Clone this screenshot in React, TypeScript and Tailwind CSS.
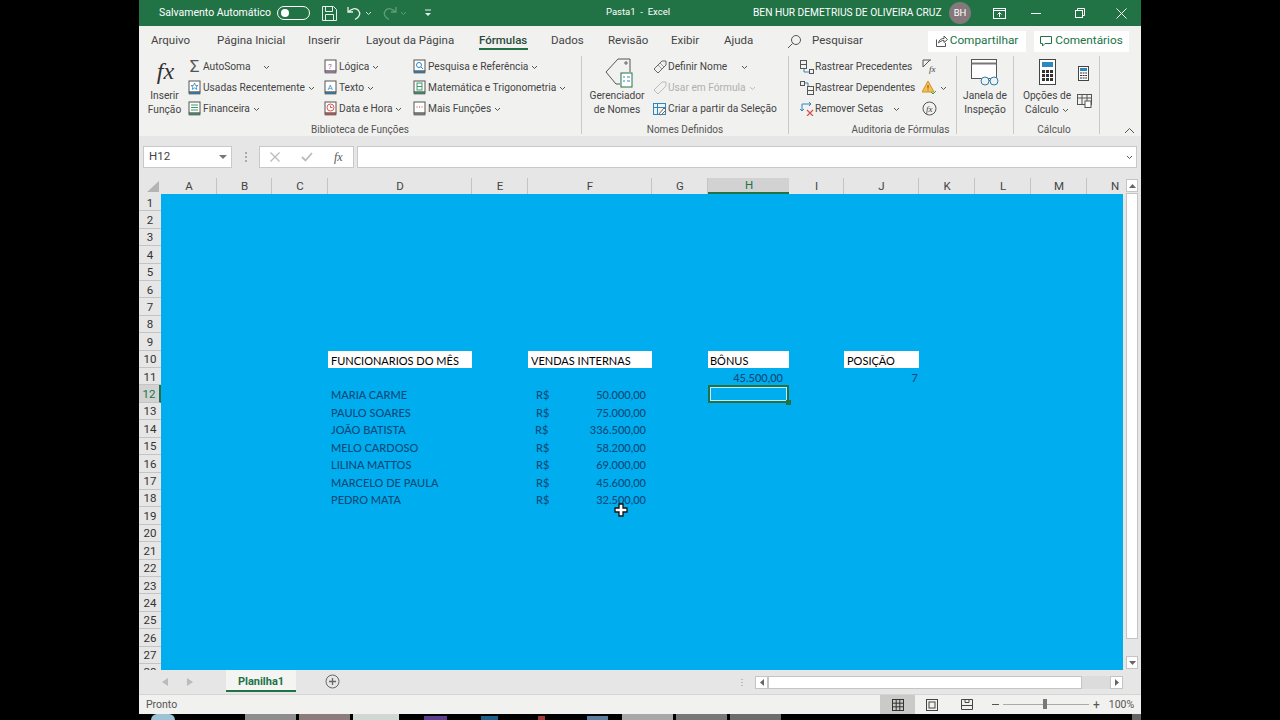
import React from "react";

const UI = "font-['Roboto','Open_Sans',sans-serif]";

const Chev = ({ c = "#555" }: { c?: string }) => (
  <svg width="7" height="5" viewBox="0 0 7 5" className="shrink-0 ml-[3px] mt-[1px]"><path d="M1 1l2.500 2.500L6 1" fill="none" stroke={c} strokeWidth="1" /></svg>
);

const Book = ({ fill, mark }: { fill: string; mark: React.ReactNode }) => (
  <svg width="13" height="15" viewBox="0 0 13 15" className="shrink-0">
    <rect x="1" y="1" width="11" height="11" fill="#fff" stroke="#555" />
    <rect x="1" y="12" width="11" height="2" fill={fill} stroke="#555" strokeWidth=".7" />
    {mark}
  </svg>
);

const Row = ({ icon, label, chev, dim }: { icon: React.ReactNode; label: string; chev?: boolean; dim?: boolean }) => (
  <div className={`flex items-center h-[21px] whitespace-nowrap ${dim ? "text-[#b0b0b0]" : "text-[#444]"}`}>
    <span className="w-[15px] h-[16px] flex items-center justify-center shrink-0">{icon}</span>
    <span className="ml-[1px] text-[10.2px]">{label}</span>
    {chev ? <Chev c={dim ? "#bbb" : "#555"} /> : null}
  </div>
);

const Group = ({ w, label, labelCls = "", children }: { w: string; label: string; labelCls?: string; children: React.ReactNode }) => (
  <div className={`${w} h-[78px] flex flex-col border-r border-[#c9c9c7] shrink-0 my-[2px]`}>
    <div className="flex-1 flex min-h-0">{children}</div>
    <div className={`h-[15px] mb-[-4px] text-center text-[10px] leading-[14px] text-[#555] whitespace-nowrap ${labelCls}`}>{label}</div>
  </div>
);

const colWidths = [["A", 56], ["B", 55], ["C", 56], ["D", 144], ["E", 56], ["F", 124], ["G", 56], ["H", 81], ["I", 55], ["J", 75], ["K", 56], ["L", 56], ["M", 56], ["N", 56]] as const;

const names = [
  ["MARIA CARME", "50.000,00", "row-start-12", "pl-[8px]"],
  ["PAULO SOARES", "75.000,00", "row-start-13", "pl-[8px]"],
  ["JOÃO BATISTA", "336.500,00", "row-start-14", "pl-[7px]"],
  ["MELO CARDOSO", "58.200,00", "row-start-15", "pl-[8px]"],
  ["LILINA MATTOS", "69.000,00", "row-start-16", "pl-[8px]"],
  ["MARCELO DE PAULA", "45.600,00", "row-start-17", "pl-[8px]"],
  ["PEDRO MATA", "32.500,00", "row-start-18", "pl-[8px]"],
];

const tabs = [
  ["Arquivo", "ml-[12px] w-[66px]"], ["Página Inicial", "w-[91px]"], ["Inserir", "w-[58px]"], ["Layout da Página", "w-[113px]"],
  ["Fórmulas", "w-[72px]"], ["Dados", "w-[57px]"], ["Revisão", "w-[63px]"], ["Exibir", "w-[53px]"], ["Ajuda", "w-[64px]"],
];

export default function App() {
  return (
    <div className={`w-[1280px] h-[720px] bg-black overflow-hidden flex flex-col items-center ${UI}`}>
      <div className="w-[1002px] h-[714px] shrink-0 flex flex-col bg-[#f1f1ef]">
        {/* Title bar */}
        <div className="h-[26px] bg-[#217346] flex items-center text-white shrink-0 relative">
          <span className="ml-[20px] w-[118px] text-[10.5px] whitespace-nowrap">Salvamento Automático</span>
          <span className="w-[33px] h-[14px] rounded-full border border-white flex items-center pl-[3px]"><span className="w-[8px] h-[8px] rounded-full bg-white" /></span>
          <svg width="15" height="15" viewBox="0 0 15 15" className="ml-[12px]" fill="none" stroke="#e8f1ec"><path d="M.5.5h11l3 3v11H.5z" /><path d="M3.500.5v5h7v-5M3.500 14.500v-6h8v6" /></svg>
          <svg width="15" height="15" viewBox="0 0 15 15" className="ml-[10px]" fill="none" stroke="#e8f1ec" strokeWidth="1.300"><path d="M1 1v5h5M1.500 6C4 2.500 9 1.500 11.500 4.500c2.500 3 1 6.500-3.500 9" /></svg>
          <Chev c="#d5e5dc" />
          <svg width="15" height="15" viewBox="0 0 15 15" className="ml-[10px]" fill="none" stroke="#5f9c7c" strokeWidth="1.300"><path d="M14 1v5H9M13.500 6C11 2.500 6 1.500 3.500 4.500c-2.500 3-1 6.500 3.500 9" /></svg>
          <Chev c="#5f9c7c" />
          <svg width="8" height="8" viewBox="0 0 8 8" className="ml-[17px]"><path d="M1 1h6" stroke="#e8f1ec" /><path d="M1 4h6L4 7z" fill="#e8f1ec" /></svg>
          <span className="ml-[174px] w-[147px] text-[9.5px] mb-[2px] whitespace-pre">Pasta1  -  Excel</span>
          <span className="text-[10.2px] w-[196px] whitespace-nowrap">BEN HUR DEMETRIUS DE OLIVEIRA CRUZ</span>
          <span className="w-[22px] h-[22px] rounded-full bg-[#84787a] text-[9.5px] flex items-center justify-center">BH</span>
          <svg width="13" height="11" viewBox="0 0 13 11" className="ml-[22px]" fill="none" stroke="#fff"><rect x=".5" y=".5" width="12" height="10" /><path d="M.5 2.500h12M6.500 9V4.500M4.500 6.500l2-2 2 2" /></svg>
          <span className="ml-[25px] w-[10px] h-[1px] bg-white" />
          <svg width="10" height="10" viewBox="0 0 10 10" className="ml-[34px]" fill="none" stroke="#fff"><rect x=".5" y="2.500" width="7" height="7" /><path d="M2.500 2.500v-2h7v7h-2" /></svg>
          <svg width="11" height="11" viewBox="0 0 11 11" className="ml-[31px]" fill="none" stroke="#fff"><path d="M.5.5l10 10M10.500.5l-10 10" /></svg>
        </div>

        {/* Tabs */}
        <div className="h-[28px] flex items-center shrink-0 pt-[2px] text-[11.5px] text-[#444]">
          {tabs.map(([t, w]) => (
            <div key={t} className={`${w} shrink-0 h-full flex items-center relative whitespace-nowrap ${t === "Fórmulas" ? "font-medium text-[#2b4a39]" : ""}`}>
              {t}
              {t === "Fórmulas" ? <span className="absolute left-0 bottom-[4px] w-[49px] h-[2px] bg-[#217346]" /> : null}
            </div>
          ))}
          <svg width="15" height="15" viewBox="0 0 15 15" fill="none" stroke="#555" className="ml-[-1px]"><circle cx="9" cy="6" r="4.500" /><path d="M5.500 9.500L1 14" /></svg>
          <span className="ml-[10px] w-[116px]">Pesquisar</span>
          <div className="w-[98px] h-[21px] bg-white flex items-center justify-center text-[#217346] text-[11.8px] gap-[2px]">
            <svg width="12" height="12" viewBox="0 0 12 12" fill="none" stroke="#555"><path d="M.5 4.500v7h9V8M2.500 8C3 5 5 3.500 8 3.500V1l3.500 3.500L8 7.500V5.500C5.500 5.500 4 6.500 2.500 8z" /></svg>
            Compartilhar
          </div>
          <div className="ml-[8px] w-[95px] h-[21px] bg-white flex items-center justify-center text-[#217346] text-[11.8px] gap-[3px]">
            <svg width="12" height="11" viewBox="0 0 12 11" fill="none" stroke="#217346"><path d="M.5.5h11v7H5L2.500 10V7.500h-2z" /></svg>
            Comentários
          </div>
        </div>

        {/* Ribbon */}
        <div className="h-[82px] flex shrink-0 text-[#444] relative">
          <Group w="w-[443px]" label="Biblioteca de Funções">
            <div className="w-[48px] flex flex-col items-center shrink-0">
              <span className="font-['Liberation_Serif',serif] italic text-[24px] leading-[30px] text-[#333] h-[32px] ml-[5px]">fx</span>
              <span className="text-[10.2px] leading-[14px] text-center ml-[3px] mt-[1px]">Inserir<br />Função</span>
            </div>
            <div className="w-[136px] shrink-0">
              <div className="flex items-center h-[21px]"><span className="w-[15px] text-[17px] leading-[17px] text-[#555] text-center">Σ</span><span className="ml-[1px] text-[10.2px] w-[57px] whitespace-nowrap">AutoSoma</span><Chev /></div>
              <Row label="Usadas Recentemente" chev icon={<Book fill="#2e86c1" mark={<path d="M6.500 3l1 2.500h2.500l-2 1.500.8 2.500-2.300-1.500-2.300 1.500.8-2.500-2-1.500h2.500z" fill="none" stroke="#2e86c1" strokeWidth=".8" />} />} />
              <Row label="Financeira" chev icon={<Book fill="#3c9a6a" mark={<path d="M3 4h7M3 6.500h7M3 9h7" stroke="#3c9a6a" />} />} />
            </div>
            <div className="w-[89px] shrink-0">
              <Row label="Lógica" chev icon={<Book fill="#a98bb8" mark={<text x="4" y="10" fontSize="8" fill="#8b5a9f">?</text>} />} />
              <Row label="Texto" chev icon={<Book fill="#2e86c1" mark={<text x="3.500" y="10" fontSize="8" fill="#2e86c1">A</text>} />} />
              <Row label="Data e Hora" chev icon={<Book fill="#d9534f" mark={<g fill="none" stroke="#d9534f"><circle cx="6.500" cy="6.500" r="3.500" /><path d="M6.500 4.500v2h2" /></g>} />} />
            </div>
            <div className="flex-1">
              <Row label="Pesquisa e Referência" chev icon={<Book fill="#2e86c1" mark={<g fill="none" stroke="#2e86c1"><circle cx="6" cy="6" r="2.500" /><path d="M8 8l2 2" /></g>} />} />
              <Row label="Matemática e Trigonometria" chev icon={<Book fill="#3c9a6a" mark={<g fill="none" stroke="#3c9a6a"><rect x="4" y="3" width="5" height="7" /><path d="M4 6.500h5" /></g>} />} />
              <Row label="Mais Funções" chev icon={<Book fill="#888" mark={<path d="M3.500 6h1M6 6h1M8.500 6h1" stroke="#c0392b" />} />} />
            </div>
          </Group>
          <Group w="w-[207px]" label="Nomes Definidos">
            <div className="w-[70px] shrink-0 flex flex-col items-center">
              <svg width="28" height="30" viewBox="0 0 28 30" fill="none" stroke="#555" className="mt-[2px] ml-[4px]">
                <path d="M13 1h12v13M13 1L1 14l10 12h4" strokeWidth="1" /><circle cx="21" cy="5" r="1.200" />
                <rect x="16" y="15" width="11" height="14" fill="#fff" stroke="#217346" />
                <path d="M18 19h2M18 23h2M22 19h3M22 23h3" stroke="#2e86c1" />
              </svg>
              <span className="text-[10.2px] leading-[14px] text-center whitespace-nowrap mt-[1px]">Gerenciador<br />de Nomes</span>
            </div>
            <div className="flex-1">
              <div className="flex items-center h-[21px]">
                <span className="w-[15px] flex justify-center"><svg width="14" height="14" viewBox="0 0 14 14" fill="none" stroke="#666"><path d="M9 1h4v4l-8 8-4-4z" /><path d="M7 3l4 4M5 5l4 4" strokeWidth=".6" /></svg></span>
                <span className="ml-[1px] text-[10.2px] w-[70px]">Definir Nome</span><Chev />
              </div>
              <Row dim label="Usar em Fórmula" chev icon={<svg width="14" height="14" viewBox="0 0 14 14" fill="none" stroke="#bbb"><path d="M9 1h4v4l-8 8-4-4z" /></svg>} />
              <Row label="Criar a partir da Seleção" icon={<svg width="14" height="14" viewBox="0 0 14 14" fill="none" stroke="#2e86c1"><rect x=".5" y="1.500" width="12" height="11" /><path d="M.5 5.500h12M4.500 1.500v11" /><path d="M6 12l5-6 2 2-5 5z" fill="#fff" stroke="#666" /></svg>} />
            </div>
          </Group>
          <Group w="w-[168px]" label="Auditoria de Fórmulas" labelCls="pl-[56px]">
            <div className="w-[125px] shrink-0 pl-[10px]">
              <Row label="Rastrear Precedentes" icon={<svg width="14" height="14" viewBox="0 0 14 14" fill="none" stroke="#555"><rect x=".5" y=".5" width="6" height="8" /><path d="M.5 4.500h6" /><path d="M4 9v3h5" stroke="#2e86c1" /><rect x="9.500" y="9.500" width="4" height="4" /></svg>} />
              <Row label="Rastrear Dependentes" icon={<svg width="14" height="14" viewBox="0 0 14 14" fill="none" stroke="#555"><rect x=".5" y=".5" width="4" height="4" /><path d="M5 2h3v3" stroke="#2e86c1" /><rect x="7.500" y="5.500" width="6" height="8" /><path d="M7.500 9.500h6" /></svg>} />
              <div className="flex items-center h-[21px] whitespace-nowrap">
                <span className="w-[15px] flex justify-center"><svg width="14" height="14" viewBox="0 0 14 14" fill="none"><path d="M2 9V2h9M9 0l2 2-2 2M2 9L0 7M2 9l2-2" stroke="#2e86c1" /><path d="M7 8l6 6M13 8l-6 6" stroke="#d9534f" strokeWidth="1.300" /></svg></span>
                <span className="ml-[1px] text-[10.2px] w-[75px]">Remover Setas</span><Chev />
              </div>
            </div>
            <div className="flex-1 pl-[8px]">
              <div className="h-[21px] flex items-center"><svg width="15" height="15" viewBox="0 0 15 15" fill="none" stroke="#555"><path d="M1 1h8M1 1v7l7-7" /><text x="7" y="13" fontSize="9" fontStyle="italic" fill="#444" stroke="none" fontFamily="Liberation Serif">fx</text></svg></div>
              <div className="h-[21px] flex items-center"><svg width="15" height="15" viewBox="0 0 15 15"><path d="M6 1l6 11H0z" fill="#f2c14e" stroke="#c9962b" /><path d="M6 5v3.500M6 9.500v1" stroke="#b33" /><path d="M9 12l2 2 3-3" stroke="#3c9a6a" fill="none" /></svg><Chev /></div>
              <div className="h-[21px] flex items-center"><svg width="15" height="15" viewBox="0 0 15 15" fill="none" stroke="#555"><circle cx="7.500" cy="7.500" r="6.500" /><text x="4" y="11" fontSize="9" fontStyle="italic" fill="#444" stroke="none" fontFamily="Liberation Serif">fx</text></svg></div>
            </div>
          </Group>
          <Group w="w-[57px]" label="">
            <div className="w-full flex flex-col items-center">
              <svg width="28" height="29" viewBox="0 0 28 29" fill="none" className="mt-[3px]"><rect x=".5" y=".5" width="25" height="19" fill="#fff" stroke="#555" /><path d="M.5 4.500h25" stroke="#777" strokeWidth="2" /><circle cx="14" cy="22" r="4" stroke="#2e7fa8" fill="#f1f1ef" /><circle cx="23" cy="22" r="4" stroke="#2e7fa8" fill="#f1f1ef" /><path d="M18 21.500h1" stroke="#2e7fa8" /></svg>
              <span className="text-[10.2px] leading-[14px] text-center mt-[1px]">Janela de<br />Inspeção</span>
            </div>
          </Group>
          <Group w="w-[86px]" label="Cálculo" labelCls="pr-[5px]">
            <div className="w-[60px] ml-[3px] flex flex-col items-center shrink-0">
              <svg width="17" height="26" viewBox="0 0 17 26" className="mt-[3px]"><rect x=".5" y=".5" width="16" height="25" fill="#fff" stroke="#444" /><rect x="3" y="3" width="11" height="5" fill="#2e86c1" />{[11, 15, 19].map((y) => [3, 7, 11].map((x) => <rect key={`${x}-${y}`} x={x} y={y} width="3" height="3" fill="#333" />))}</svg>
              <span className="text-[10.2px] leading-[14px] text-center mt-[4px] whitespace-nowrap">Opções de<br /><span className="inline-flex items-center">Cálculo<Chev /></span></span>
            </div>
            <div className="flex-1 flex flex-col items-start pt-[10px]">
              <svg width="11" height="15" viewBox="0 0 11 15" className="ml-[1px]"><rect x=".5" y=".5" width="10" height="14" fill="#fff" stroke="#444" /><rect x="2" y="2" width="7" height="3" fill="#2e86c1" /><path d="M2 7h7M2 9.500h7M2 12h7" stroke="#333" strokeWidth="1.200" strokeDasharray="2 .6" /></svg>
              <svg width="15" height="14" viewBox="0 0 15 14" className="mt-[13px]" fill="none" stroke="#555"><rect x=".5" y=".5" width="14" height="10" /><path d="M.5 4h14M5 .5v10M10 .5v10" /><rect x="8" y="7" width="6" height="6.500" fill="#fff" /></svg>
            </div>
          </Group>
          <svg width="11" height="7" viewBox="0 0 11 7" className="absolute right-[6px] bottom-[2px]" fill="none" stroke="#555"><path d="M1 6l4.500-4.500L10 6" /></svg>
        </div>

        {/* Formula bar */}
        <div className="h-[41px] bg-[#e6e6e6] flex items-center shrink-0 pl-[4px] pr-[4px] pt-[1px]">
          <div className="w-[89px] h-[22px] bg-white border border-[#c9c9c9] flex items-center justify-between pl-[5px] pr-[4px] text-[11.5px] text-[#444]">
            H12
            <svg width="8" height="4" viewBox="0 0 8 4"><path d="M0 0h8L4 4z" fill="#777" /></svg>
          </div>
          <div className="w-[27px] flex flex-col items-center gap-[2px]"><span className="w-[2px] h-[2px] bg-[#aaa]" /><span className="w-[2px] h-[2px] bg-[#aaa]" /><span className="w-[2px] h-[2px] bg-[#aaa]" /></div>
          <div className="w-[95px] h-[22px] bg-white border border-[#c9c9c9] flex items-center pl-[10px]">
            <svg width="10" height="10" viewBox="0 0 10 10" fill="none" stroke="#bbb" strokeWidth="1.300"><path d="M.5.5l9 9M9.500.5l-9 9" /></svg>
            <svg width="12" height="10" viewBox="0 0 12 10" fill="none" stroke="#bbb" strokeWidth="1.800" className="ml-[21px]"><path d="M1 5l3.500 3.500L11 1" /></svg>
            <span className="ml-[21px] font-['Liberation_Serif',serif] italic text-[12px] text-[#555]">fx</span>
          </div>
          <div className="ml-[3px] flex-1 h-[22px] bg-white border border-[#c9c9c9] flex items-center justify-end pr-[3px]">
            <Chev />
          </div>
        </div>

        {/* Sheet area */}
        <div className="h-[493px] flex shrink-0 bg-[#e6e6e6] overflow-hidden">
          <div className="w-[984px] shrink-0 flex flex-col">
            {/* Column headers */}
            <div className="h-[17px] flex shrink-0 pt-[1px] overflow-hidden">
              <div className="w-[22px] shrink-0 flex items-end justify-end pr-[2px] pb-[2px]">
                <svg width="12" height="11" viewBox="0 0 12 11"><path d="M12 0v11H0z" fill="#b4b4b4" /></svg>
              </div>
              {colWidths.map(([c, w]) => (
                <div key={c} style={{ width: w }} className={`shrink-0 flex items-center justify-center pl-[1px] pt-[1px] text-[11.5px] ${c === "H" ? "bg-[#d2d2d2] border-b-2 border-[#217346] text-[#217346]" : "text-[#444] border-r border-[#c4c4c4]"}`}>{c}</div>
              ))}
            </div>
            <div className="flex-1 flex min-h-0">
              {/* Row headers */}
              <div className="w-[22px] shrink-0 overflow-hidden">
                {Array.from({ length: 27 }, (_, i) => i + 1).map((n) => (
                  <div key={n} className={`h-[17.42px] flex items-center justify-center pt-[2px] text-[11.5px] border-b border-[#c4c4c4] ${n === 12 ? "bg-[#d2d2d2] text-[#217346] border-r-2 border-r-[#217346]" : "text-[#333]"}`}>{n}</div>
                ))}
                <div className="h-[6px] overflow-hidden text-center text-[11.5px] leading-[16px] text-[#333]">28</div>
              </div>
              {/* Cells */}
              <div className="flex-1 bg-[#00adef] relative overflow-hidden font-['Lato',sans-serif] font-medium text-[#0b4a78] text-[11px]">
                <div className="grid grid-cols-[56px_55px_56px_144px_56px_124px_56px_81px_55px_75px_56px_56px_56px_56px] auto-rows-[17.42px]">
                  <div className="col-start-4 row-start-10 bg-white text-black font-normal pl-[3px] leading-[19px] whitespace-nowrap">FUNCIONARIOS DO MÊS</div>
                  <div className="col-start-6 row-start-10 bg-white text-black font-normal pl-[3px] leading-[19px] whitespace-nowrap">VENDAS INTERNAS</div>
                  <div className="col-start-8 row-start-10 bg-white text-black font-normal pl-[2px] leading-[19px]">BÔNUS</div>
                  <div className="col-start-10 row-start-10 bg-white text-black font-normal pl-[3px] leading-[19px]">POSIÇÃO</div>
                  <div className="col-start-8 row-start-11 text-right pr-[6px] leading-[20px]">45.500,00</div>
                  <div className="col-start-10 row-start-11 text-right pr-[1px] leading-[20px]">7</div>
                  {names.map(([n, v, r, p]) => (
                    <React.Fragment key={n}>
                      <div className={`col-start-4 ${r} pl-[3px] leading-[20px] whitespace-nowrap`}>{n}</div>
                      <div className={`col-start-6 ${r} ${p} flex justify-between pr-[6px] leading-[20px]`}><span>R$</span><span>{v}</span></div>
                    </React.Fragment>
                  ))}
                  <div className="col-start-8 row-start-12 border-2 border-[#217346] relative outline outline-1 -outline-offset-3 outline-[#bfe9f7]">
                    <span className="absolute right-[-4px] bottom-[-4px] w-[5px] h-[5px] bg-[#217346]" />
                  </div>
                </div>
                <svg width="14" height="14" viewBox="0 0 14 14" className="absolute left-[453px] top-[309px]"><path d="M5 1h4v4h4v4H9v4H5V9H1V5h4z" fill="#fff" stroke="#111" strokeWidth="1.300" /></svg>
              </div>
            </div>
          </div>
          {/* Vertical scrollbar */}
          <div className="flex-1 flex flex-col items-center pt-[2px] pb-[1px]">
            <div className="w-[12px] h-[13px] bg-white border border-[#c4c4c4] flex items-center justify-center"><svg width="7" height="4" viewBox="0 0 7 4"><path d="M3.500 0L7 4H0z" fill="#666" /></svg></div>
            <div className="w-[12px] h-[446px] bg-white border border-[#c4c4c4] mt-[1px]" />
            <div className="flex-1" />
            <div className="w-[12px] h-[13px] bg-white border border-[#c4c4c4] flex items-center justify-center"><svg width="7" height="4" viewBox="0 0 7 4"><path d="M3.500 4L7 0H0z" fill="#666" /></svg></div>
          </div>
        </div>

        {/* Sheet tabs */}
        <div className="h-[25px] bg-[#e6e6e6] flex items-start shrink-0 border-b border-[#d5d5d5]">
          <svg width="6" height="8" viewBox="0 0 6 8" className="ml-[23px] mt-[8px]"><path d="M6 0v8L0 4z" fill="#bbb" /></svg>
          <svg width="6" height="8" viewBox="0 0 6 8" className="ml-[19px] mt-[8px]"><path d="M0 0v8l6-4z" fill="#bbb" /></svg>
          <div className="ml-[33px] w-[70px] h-[22px] bg-[#f4f4f2] border-b-2 border-[#217346] flex items-center justify-center pt-[4px] text-[11px] font-bold text-[#217346]">Planilha1</div>
          <svg width="15" height="15" viewBox="0 0 15 15" className="ml-[29px] mt-[4px]" fill="none" stroke="#666"><circle cx="7.500" cy="7.500" r="6.500" /><path d="M7.500 4v7M4 7.500h7" strokeWidth="1.300" /></svg>
          <div className="ml-[401px] mt-[9px] flex flex-col gap-[2px]"><span className="w-[2px] h-[1px] bg-[#bbb]" /><span className="w-[2px] h-[1px] bg-[#bbb]" /><span className="w-[2px] h-[1px] bg-[#bbb]" /></div>
          <div className="ml-[12px] mt-[6px] w-[13px] h-[13px] bg-white border border-[#c4c4c4] flex items-center justify-center"><svg width="4" height="7" viewBox="0 0 4 7"><path d="M4 0v7L0 3.500z" fill="#666" /></svg></div>
          <div className="mt-[6px] w-[314px] h-[13px] bg-white border border-[#c4c4c4]" />
          <div className="mt-[6px] w-[28px] h-[13px] bg-[#dcdcdc]" />
          <div className="mt-[6px] w-[13px] h-[13px] bg-white border border-[#c4c4c4] flex items-center justify-center"><svg width="4" height="7" viewBox="0 0 4 7"><path d="M0 0v7l4-3.500z" fill="#666" /></svg></div>
        </div>

        {/* Status bar */}
        <div className="flex-1 flex items-center text-[10.5px] text-[#555]">
          <span className="ml-[7px] w-[734px]">Pronto</span>
          <div className="w-[35px] h-full bg-[#cacac8] flex items-center justify-center">
            <svg width="12" height="12" viewBox="0 0 12 12" fill="none" stroke="#333"><rect x=".5" y=".5" width="11" height="11" /><path d="M4.200.5v11M7.800.5v11M.5 4.200h11M.5 7.800h11" /></svg>
          </div>
          <svg width="12" height="12" viewBox="0 0 12 12" fill="none" stroke="#444" className="ml-[11px]"><rect x=".5" y=".5" width="11" height="11" /><rect x="3" y="3" width="6" height="6" /></svg>
          <svg width="12" height="11" viewBox="0 0 12 11" fill="none" stroke="#444" className="ml-[23px]"><path d="M.5.5h11v10H.5zM.5 6.500h11" /><path d="M4 .5v3h4v-3" /></svg>
          <span className="ml-[19px] w-[7px] h-[1px] bg-[#555]" />
          <div className="ml-[4px] w-[86px] h-[1px] bg-[#aaa] relative"><span className="absolute left-[40px] top-[-5px] w-[4px] h-[10px] bg-[#777]" /></div>
          <span className="ml-[4px] text-[12px] leading-none">+</span>
          <span className="ml-[9px]">100%</span>
        </div>
      </div>
      {/* Taskbar sliver */}
      <div className="w-[1002px] h-[6px] flex shrink-0 bg-black">
        <span className="ml-[12px] w-[24px] h-[6px] rounded-t-full bg-[#9cc3d5]" />
        <span className="ml-[70px] w-[51px] h-[6px] bg-[#8d8d8d]" />
        <span className="ml-[3px] w-[51px] h-[6px] bg-[#8d7c7c]" />
        <span className="ml-[3px] w-[46px] h-[6px] bg-[#cfd8d3]" />
        <span className="ml-[25px] w-[23px] h-[4px] mt-[2px] bg-[#5b3f8c]" />
        <span className="ml-[34px] w-[17px] h-[4px] mt-[2px] bg-[#1f5f85]" />
        <span className="ml-[40px] w-[7px] h-[4px] mt-[2px] bg-[#a33a3a]" />
        <span className="ml-[42px] w-[21px] h-[4px] mt-[2px] bg-[#5b7ea0]" />
        <span className="ml-[14px] w-[51px] h-[6px] bg-[#a8a8a8]" />
        <span className="ml-[3px] w-[51px] h-[6px] bg-[#777]" />
        <span className="ml-[3px] w-[51px] h-[6px] bg-[#6c6c6c]" />
        <span className="ml-[351px] w-[9px] h-[6px] bg-[#666]" />
      </div>
    </div>
  );
}
